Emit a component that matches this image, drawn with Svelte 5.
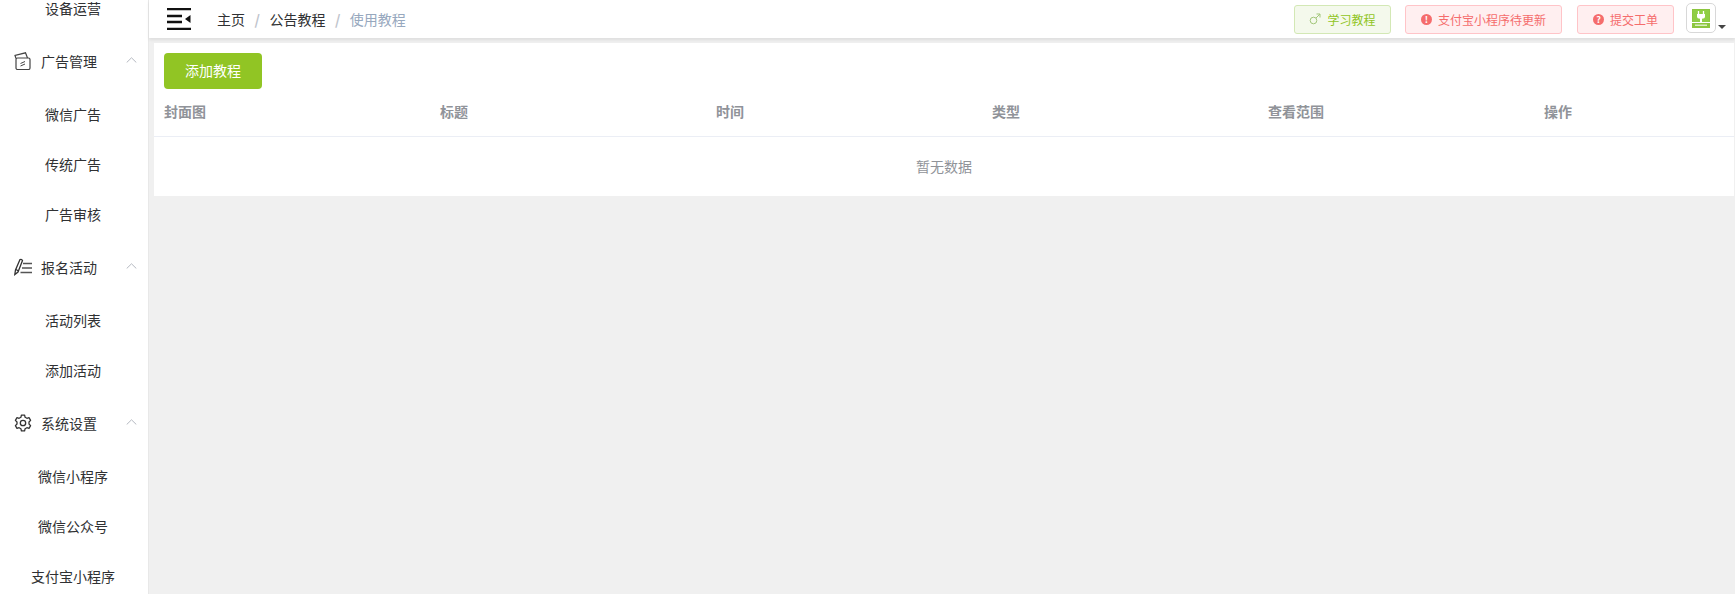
<script lang="ts">
  const groups = [
    { title: '', icon: '', items: ['设备运营'] },
    { title: '广告管理', icon: 'ad', items: ['微信广告', '传统广告', '广告审核'] },
    { title: '报名活动', icon: 'form', items: ['活动列表', '添加活动'] },
    { title: '系统设置', icon: 'gear', items: ['微信小程序', '微信公众号', '支付宝小程序'] },
  ]
  const columns = ['封面图', '标题', '时间', '类型', '查看范围', '操作']
</script>

<div class="layout">
  <aside class="sidebar">
    <div class="menu">
      {#each groups as group}
        {#if group.title}
          <div class="group-title">
            <span class="group-icon">
              {#if group.icon === 'ad'}
                <svg width="18" height="18" viewBox="0 0 18 18" fill="none" stroke="#444" stroke-width="1.2">
                  <rect x="2" y="6" width="14" height="11.500" rx="1.500" />
                  <path d="M2 6.500 L1 3.500 L11.500 0.800 L13.500 6" />
                  <path d="M6.500 11.500 L11 9.500 M6.500 14 L11 12" stroke-width="1" />
                </svg>
              {:else if group.icon === 'form'}
                <svg width="18" height="18" viewBox="0 0 18 18" fill="none" stroke="#333" stroke-width="1.300">
                  <path d="M0.800 16.500 L1.500 12 L6 1.500 Q7.800 0.800 8.500 2.500 L4 14 Z" />
                  <path d="M2 11.500 L4.500 13" />
                  <path d="M9 5.500 H18 M8 10 H18 M6.500 14.500 H18" stroke="#555" />
                </svg>
              {:else}
                <svg width="18" height="18" viewBox="0 0 18 18" fill="none" stroke="#333" stroke-width="1.300">
                  <path d="M7.400 1.200 H10.600 L11.100 3.300 L12.900 4.300 L15 3.700 L16.600 6.400 L15 8 V10 L16.600 11.600 L15 14.300 L12.900 13.700 L11.100 14.700 L10.600 16.800 H7.400 L6.900 14.700 L5.100 13.700 L3 14.300 L1.400 11.600 L3 10 V8 L1.400 6.400 L3 3.700 L5.100 4.300 L6.900 3.300 Z" stroke-linejoin="round" />
                  <circle cx="9" cy="9" r="2.700" />
                </svg>
              {/if}
            </span>
            <span class="group-label">{group.title}</span>
            <svg class="chevron" width="11" height="6" viewBox="0 0 11 6" fill="none" stroke="#b4b8c0" stroke-width="1">
              <path d="M0.700 5.500 L5.500 0.800 L10.300 5.500" />
            </svg>
          </div>
        {/if}
        {#each group.items as item}
          <div class="menu-item">{item}</div>
        {/each}
      {/each}
    </div>
  </aside>

  <div class="main">
    <header class="topbar">
      <div class="topbar-left">
        <svg class="fold" width="24" height="22" viewBox="0 0 24 22">
          <path d="M0 1 H24 M0 8 H15 M0 14 H15 M0 21 H24" stroke="#111" stroke-width="2.400" />
          <path d="M23.500 7 V15 L18 11 Z" fill="#111" />
        </svg>
        <nav class="crumbs">
          <span>主页</span><i>/</i><span>公告教程</span><i>/</i><span class="current">使用教程</span>
        </nav>
      </div>
      <div class="actions">
        <button class="tag green">
          <svg width="12" height="12" viewBox="0 0 12 12" fill="none" stroke="#a3c77a" stroke-width="1">
            <circle cx="4.500" cy="7.500" r="3.300" />
            <path d="M7 5 L11 1 M7.500 1 H11 V4.500" />
          </svg>
          学习教程
        </button>
        <button class="tag red wide">
          <span class="dot">!</span>
          支付宝小程序待更新
        </button>
        <button class="tag red">
          <span class="dot">?</span>
          提交工单
        </button>
        <div class="user">
          <div class="avatar">
            <svg width="18" height="19" viewBox="0 0 18 19">
              <rect width="18" height="19" fill="#8cc63f" />
              <rect x="1" y="1" width="16" height="12" fill="#8fce45" />
              <path d="M6.500 2 V5 M11.500 2 V5" stroke="#fff" stroke-width="1.300" />
              <path d="M5 5 H13 V8 Q13 9.500 10 9.800 V13 H8 V9.800 Q5 9.500 5 8 Z" fill="#fff" />
              <rect x="0" y="13" width="18" height="1" fill="#fff" />
              <rect x="3" y="15.500" width="12" height="1.500" fill="#d9eec0" />
            </svg>
          </div>
          <span class="caret"></span>
        </div>
      </div>
    </header>

    <section class="content">
      <div class="card">
        <button class="add-btn">添加教程</button>
        <div class="table-head">
          {#each columns as col}
            <div class="th">{col}</div>
          {/each}
        </div>
        <div class="empty">暂无数据</div>
      </div>
    </section>
  </div>
</div>

<style>
  :global(body) {
    margin: 0;
    background: #f0f0f0;
    overflow: hidden;
  }
  .layout {
    display: flex;
    height: 594px;
    overflow: hidden;
    font-family: "Noto Sans CJK SC", "Liberation Sans", sans-serif;
    font-size: 14px;
  }
  .sidebar {
    width: 148px;
    flex-shrink: 0;
    background: #fff;
    border-right: 1px solid #e8e8e8;
    overflow: hidden;
  }
  .menu {
    margin-top: -17px;
  }
  .group-title {
    display: flex;
    align-items: center;
    height: 56px;
    padding-left: 14px;
    color: #303133;
  }
  .group-icon {
    display: flex;
    width: 18px;
    height: 18px;
    margin-right: 9px;
  }
  .group-label {
    flex: 1;
  }
  .chevron {
    margin-right: 11px;
    margin-top: -2px;
  }
  .menu-item {
    height: 50px;
    line-height: 50px;
    text-align: center;
    padding-right: 2px;
    color: #303133;
  }
  .main {
    flex: 1;
    min-width: 0;
  }
  .topbar {
    display: flex;
    justify-content: space-between;
    align-items: center;
    height: 38px;
    background: #fff;
    box-shadow: 0 2px 3px rgba(0, 0, 0, 0.08);
    padding: 0 9px 0 18px;
    position: relative;
  }
  .topbar-left {
    display: flex;
    align-items: center;
  }
  .fold {
    display: block;
  }
  .crumbs {
    margin-left: 26px;
    color: #303133;
    display: flex;
    align-items: center;
  }
  .crumbs i {
    font-style: normal;
    color: #c0c4cc;
    font-weight: 700;
    margin: 0 9.500px;
  }
  .current {
    color: #97a8be;
  }
  .actions {
    display: flex;
    align-items: center;
  }
  .tag {
    height: 29px;
    width: 97px;
    margin-right: 14px;
    padding: 0;
    border-radius: 3px;
    font-family: inherit;
    font-size: 12px;
    display: flex;
    align-items: center;
    justify-content: center;
    gap: 6px;
    border: 1px solid;
  }
  .wide {
    width: 157px;
    margin-right: 15px;
  }
  .green {
    background: #f4f9ec;
    border-color: #d3e8b5;
    color: #91c524;
  }
  .red {
    background: #ffeff0;
    border-color: #ffc4c8;
    color: #f56c6c;
  }
  .dot {
    width: 11px;
    height: 11px;
    border-radius: 50%;
    background: #f56c6c;
    color: #fff;
    font-size: 9px;
    font-weight: 700;
    line-height: 11px;
    text-align: center;
  }
  .user {
    display: flex;
    align-items: flex-end;
    margin-top: -2px;
    margin-left: -2px;
  }
  .avatar {
    width: 30px;
    height: 30px;
    box-sizing: border-box;
    border: 1px solid #d8d8d8;
    border-radius: 5px;
    display: flex;
    align-items: center;
    justify-content: center;
    background: #fff;
  }
  .caret {
    width: 0;
    height: 0;
    margin: 0 0 4px 2px;
    border-left: 4px solid transparent;
    border-right: 4px solid transparent;
    border-top: 4px solid #444;
  }
  .content {
    padding: 5px 1px 0 5px;
  }
  .card {
    background: #fff;
    padding-top: 10px;
    height: 143px;
  }
  .add-btn {
    display: block;
    margin-left: 10px;
    width: 98px;
    height: 36px;
    border: none;
    border-radius: 4px;
    background: #91c524;
    color: #fff;
    font-family: inherit;
    font-size: 14px;
    line-height: 20px;
    padding: 0 0 2px;
  }
  .table-head {
    display: grid;
    grid-template-columns: repeat(6, 276px);
    height: 47px;
    line-height: 45px;
    padding-left: 10px;
    border-bottom: 1px solid #ebeef5;
    color: #909399;
    font-weight: 700;
  }
  .empty {
    height: 53px;
    line-height: 59px;
    text-align: center;
    color: #909399;
    font-size: 14px;
  }
</style>
